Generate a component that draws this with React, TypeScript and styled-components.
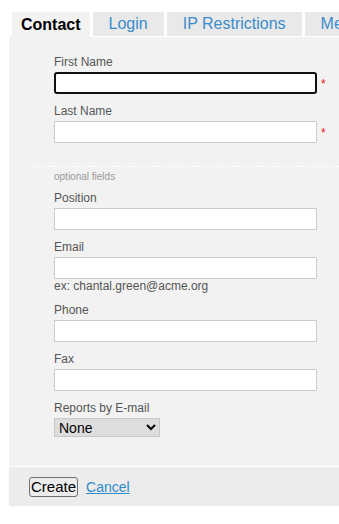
import styled, { createGlobalStyle } from "styled-components";

const GlobalStyle = createGlobalStyle`
  html, body {
    margin: 0;
    padding: 0;
    background: #fff;
    font-family: "Liberation Sans", Arial, sans-serif;
  }
`;

const tabs = ["Contact", "Login", "IP Restrictions", "Members"];

const Page = styled.div`
  width: 100vw;
  overflow: hidden;
  padding: 12px 0 0 9px;
  box-sizing: border-box;
`;

const TabBar = styled.div`
  display: flex;
  align-items: flex-start;
  gap: 3px;
  padding-left: 3px;
  white-space: nowrap;
`;

const Tab = styled.div<{ active?: boolean }>`
  flex-shrink: 0;
  height: ${({ active }) => (active ? "25px" : "24px")};
  line-height: ${({ active }) => (active ? "25px" : "24px")};
  padding: ${({ active }) => (active ? "0 9px" : "0 16px")};
  font-size: 16px;
  font-weight: ${({ active }) => (active ? 700 : 400)};
  color: ${({ active }) => (active ? "#000" : "#3a8ccb")};
  background: ${({ active }) => (active ? "#f2f2f2" : "#e9e9e9")};
`;

const Panel = styled.div`
  background: #f2f2f2;
`;

const Body = styled.div`
  padding: 18px 0 29px 24px;
`;

const Section = styled.div`
  display: flow-root;
  padding-left: 21px;
`;

const Field = styled.div`
  margin-bottom: 10px;
`;

const Label = styled.label`
  display: block;
  font-size: 12px;
  line-height: 15px;
  margin-bottom: 2px;
  color: #555;
`;

const InputRow = styled.div`
  display: flex;
  align-items: center;
`;

const TextInput = styled.input`
  box-sizing: border-box;
  width: 263px;
  height: 22px;
  margin: 0;
  padding: 0 2px;
  border: 1px solid #cccccc;
  background: #fff;
  font-family: inherit;
  font-size: 13px;
  &:focus {
    outline: none;
    border: 2px solid #101010;
    border-radius: 3px;
  }
`;

const Required = styled.span`
  margin-left: 4px;
  font-size: 12px;
  line-height: 12px;
  color: #ee1111;
  position: relative;
  top: 1px;
`;

const Hint = styled.div`
  font-size: 12px;
  line-height: 14px;
  color: #555;
`;

const Divider = styled.div`
  margin-top: 13px;
  border-top: 1px dashed #ffffff;
`;

const OptionalNote = styled.div`
  margin: 4px 0 8px 21px;
  font-size: 10px;
  line-height: 12px;
  color: #999;
`;

const Select = styled.select`
  box-sizing: border-box;
  width: 106px;
  height: 19px;
  margin: 0;
  padding: 0;
  border: 1px solid #c8c8c8;
  background-color: #dddddd;
  color: #000;
  font-family: inherit;
  font-size: 14px;
`;

const Footer = styled.div`
  display: flex;
  align-items: center;
  gap: 8px;
  height: 39px;
  padding-left: 20px;
  border-top: 1px solid #ffffff;
  background: #ececec;
`;

const Button = styled.button`
  box-sizing: border-box;
  height: 20px;
  margin: 0;
  padding: 0 1px;
  border: 1px solid #6f6f6f;
  border-radius: 3px;
  background: transparent;
  color: #000;
  font-family: inherit;
  font-size: 15px;
  line-height: 18px;
`;

const LinkText = styled.a`
  font-size: 14px;
  color: #2f8ac9;
  text-decoration: underline;
  cursor: pointer;
`;

const TextField = ({
  label,
  required,
  hint,
  autoFocus,
}: {
  label: string;
  required?: boolean;
  hint?: string;
  autoFocus?: boolean;
}) => (
  <Field>
    <Label>{label}</Label>
    <InputRow>
      <TextInput type="text" autoFocus={autoFocus} />
      {required && <Required>*</Required>}
    </InputRow>
    {hint && <Hint>{hint}</Hint>}
  </Field>
);

const App = () => {
  return (
    <Page>
      <GlobalStyle />
      <TabBar>
        {tabs.map((t, i) => (
          <Tab key={t} active={i === 0}>
            {t}
          </Tab>
        ))}
      </TabBar>
      <Panel>
        <Body>
          <Section>
            <TextField label="First Name" required autoFocus />
            <TextField label="Last Name" required />
          </Section>
          <Divider />
          <OptionalNote>optional fields</OptionalNote>
          <Section>
            <TextField label="Position" />
            <TextField label="Email" hint="ex: chantal.green@acme.org" />
            <TextField label="Phone" />
            <TextField label="Fax" />
            <Label>Reports by E-mail</Label>
            <Select defaultValue="none">
              <option value="none">None</option>
              <option value="daily">Daily</option>
              <option value="weekly">Weekly</option>
            </Select>
          </Section>
        </Body>
        <Footer>
          <Button>Create</Button>
          <LinkText>Cancel</LinkText>
        </Footer>
      </Panel>
    </Page>
  );
};

export default App;
